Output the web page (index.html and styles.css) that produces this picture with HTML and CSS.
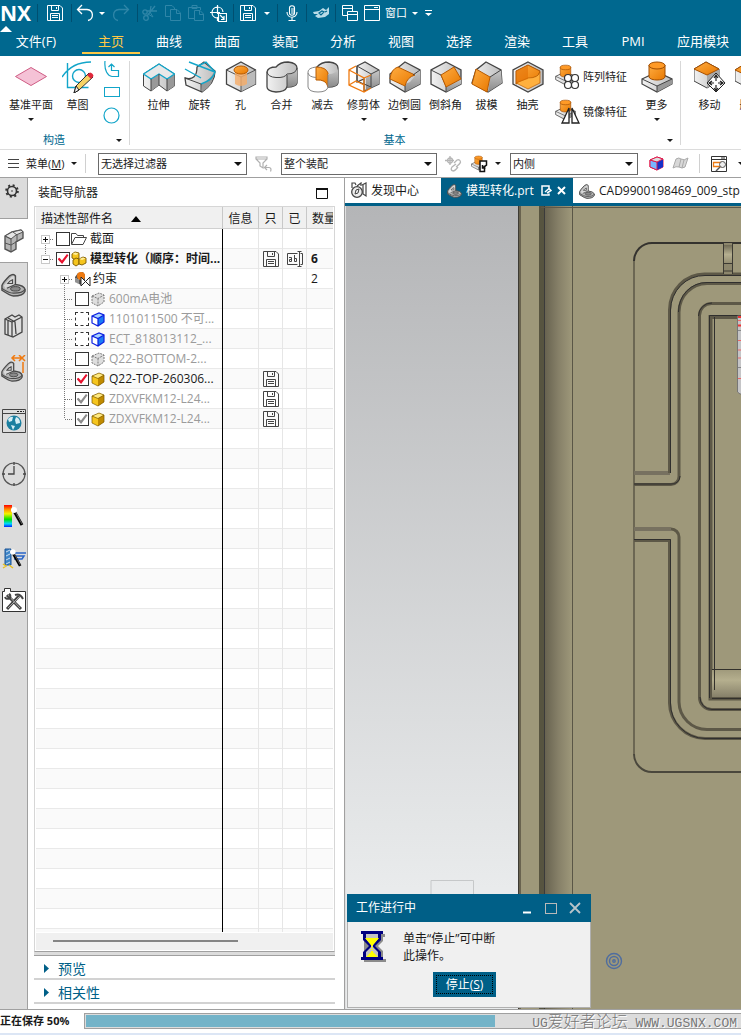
FILE: index.html
```html
<!DOCTYPE html>
<html lang="zh-CN">
<head>
<meta charset="utf-8">
<title>NX</title>
<link rel="stylesheet" href="styles.css">
</head>
<body>
<svg class="defs" aria-hidden="true">
  <defs>
    <linearGradient id="gOr" x1="0" y1="0" x2="1" y2="1"><stop offset="0" stop-color="#ffad42"/><stop offset="1" stop-color="#e87800"/></linearGradient>
    <linearGradient id="gGr" x1="0" y1="0" x2="1" y2="0"><stop offset="0" stop-color="#f2f2f2"/><stop offset="1" stop-color="#bdbdbd"/></linearGradient>
    <linearGradient id="gDk" x1="0" y1="0" x2="0" y2="1"><stop offset="0" stop-color="#c8c8c8"/><stop offset="1" stop-color="#8a8a8a"/></linearGradient>
    <linearGradient id="gRb" x1="0" y1="0" x2="0" y2="1"><stop offset="0" stop-color="#f00"/><stop offset=".2" stop-color="#ff9000"/><stop offset=".4" stop-color="#f4f400"/><stop offset=".65" stop-color="#00e000"/><stop offset=".85" stop-color="#00d8ff"/><stop offset="1" stop-color="#0020ff"/></linearGradient>
    <linearGradient id="gFillet" x1="0" y1="0" x2="1" y2="0"><stop offset="0" stop-color="#686350"/><stop offset=".5" stop-color="#868068"/><stop offset="1" stop-color="#9e987a"/></linearGradient>
    <linearGradient id="gSlot" x1="0" y1="0" x2="0" y2="1"><stop offset="0" stop-color="#6f6a55"/><stop offset=".5" stop-color="#b5af90"/><stop offset="1" stop-color="#8f896e"/></linearGradient>
    <linearGradient id="gLedge" x1="0" y1="0" x2="0" y2="1"><stop offset="0" stop-color="#9e987a"/><stop offset=".4" stop-color="#b5af8e"/><stop offset="1" stop-color="#87816a"/></linearGradient>
  </defs>
  <symbol id="save" viewBox="0 0 16 16"><path d="M.5 .5H13L15.500 3V15.500H.5ZM4.500 .5V5.500H11.500V.5M9.500 2V4M3.500 15.500V8.500H12.500V15.500M5 10.500H11M5 12.500H11" fill="none" stroke="currentColor"/></symbol>
  <symbol id="cubeY" viewBox="0 0 16 16"><path d="M2 5L9 2L14 4V11L8 15L2 12Z" fill="#f5c51d"/><path d="M2 5L9 2L14 4L8 7.500Z" fill="#ffe980"/><path d="M8 7.500L14 4V11L8 15Z" fill="#c08a00"/><path d="M2 5L9 2L14 4V11L8 15L2 12ZM2 5L8 7.500L14 4" fill="none" stroke="#7a5800" stroke-width=".7"/></symbol>
  <symbol id="cubeB" viewBox="0 0 16 16"><path d="M2 5L9 2L14 4V11L8 15L2 12Z" fill="#fff"/><path d="M2 5L9 2L14 4L8 7.500Z" fill="#a9d4ff"/><path d="M8 7.500L14 4V11L8 15Z" fill="#1b7bf5"/><path d="M2 5L9 2L14 4V11L8 15L2 12ZM2 5L8 7.500L14 4M8 7.500V15" fill="none" stroke="#0b1fe0" stroke-width="1.200"/></symbol>
  <symbol id="cubeG" viewBox="0 0 16 16"><path d="M2 5L9 2L14 4V11L8 15L2 12Z" fill="#dedede"/><path d="M2 5L9 2L14 4V11L8 15L2 12ZM2 5L8 7.500L14 4M8 7.500V15" fill="none" stroke="#7c7c7c" stroke-dasharray="2 1"/></symbol>
  <symbol id="asm" viewBox="0 0 16 16"><g stroke="#7a5800" stroke-width=".9" fill="#f5c51d"><path d="M1 3L4 1L8 2V7L5 9L1 7Z"/><path d="M2 9L5 7L8 8V13L5 15L2 13Z"/><path d="M8 8L12 6L15 7V12L11 14L8 13Z"/></g><path d="M1.500 3L4 1.500L7.500 2.500L5 4ZM8.500 8L12 6.500L14.500 7.500L11 9Z" fill="#ffee9a"/></symbol>
  <symbol id="folder" viewBox="0 0 16 16"><path d="M.5 13V2.500H5L6.500 4.500H12.500V6.500M.5 13.500L4 6.500H15.500L12 13.500Z" fill="#fff" stroke="#444"/></symbol>
  <symbol id="rename" viewBox="0 0 16 16"><path d="M10.500 2.500H.5V13.500H10.500M13.500 2.500H15.500V13.500H13.500M10.500 .5H14.500M12.500 .5V15.500M10.500 15.500H14.500" fill="none" stroke="currentColor"/><path d="M2 6.500H4.500V10.500H2.500V8.500H4.500M7.500 4V10.500H9.500V7.500H7.500" fill="none" stroke="currentColor"/></symbol>
  <symbol id="constraint" viewBox="0 0 18 16"><path d="M4 2L9 1L11 4V10L7 14L1 11V6Z" fill="#555"/><circle cx="7" cy="5" r="4" fill="#ef7a10"/><path d="M2 7V12M4 8V13" stroke="#ccc"/><path d="M7 6L16 15V6L7 15Z" fill="#fff" stroke="#222"/></symbol>
  <symbol id="part" viewBox="0 0 26 26"><path d="M1 19V14Q2 11 9 4Q13 1 15 4V13Q24 14 25 18V20Q23 25 13 25Q10 25 1 19Z" fill="#b4b4b4" stroke="#4a4a4a" stroke-width="1.500"/><path d="M3 14Q6 10 11 5Q14 3 14 6V13L5 18Z" fill="#d8d8d8"/><path d="M1 17Q8 22 13 22Q23 22 25 18M15 13L6 17M7 12Q9 9 12 8V12Z" fill="none" stroke="#4a4a4a" stroke-width="1.200"/><ellipse cx="15" cy="17.500" rx="5" ry="2.300" fill="#8a8a8a" stroke="#444"/></symbol>
  <symbol id="wand" viewBox="0 0 14 22"><path d="M3 6L11 20" stroke="#000" stroke-width="3"/><path d="M5 8L11 19" stroke="#777" stroke-width=".8"/><circle cx="3" cy="5" r="3" fill="#fff"/></symbol>
  <symbol id="gLast" viewBox="0 0 19 20"><path d="M9.500 0V10M10 10.500H18" stroke="#777" stroke-dasharray="1 1"/></symbol>
  <symbol id="gMid" viewBox="0 0 19 20"><path d="M9.500 0V20M10 10.500H18" stroke="#777" stroke-dasharray="1 1"/></symbol>
  <symbol id="gPlus" viewBox="0 0 19 20"><path d="M9.500 14V20M14 10.500H18" stroke="#777" stroke-dasharray="1 1"/><rect x="5.500" y="6.500" width="8" height="8" fill="#fff" stroke="#c8c8c8"/><path d="M7 10.500H12M9.500 8V13" stroke="#111"/></symbol>
  <symbol id="gMinus" viewBox="0 0 19 20"><path d="M9.500 0V6M14 10.500H18" stroke="#777" stroke-dasharray="1 1"/><rect x="5.500" y="6.500" width="8" height="8" fill="#fff" stroke="#c8c8c8"/><path d="M7 10.500H12" stroke="#111"/></symbol>
  <symbol id="boss" viewBox="0 0 32 32"><path d="M1 18L16 11L31 18V23L16 31L1 23Z" fill="url(#gGr)" stroke="#444" stroke-width="1.200"/><path d="M16 25L31 18V23L16 31Z" fill="#999"/><path d="M1 18L16 25L31 18M16 25V31" fill="none" stroke="#444"/><path d="M8 4V16C9 20 23 20 24 16V4Z" fill="url(#gOr)" stroke="#a04d00"/><ellipse cx="16" cy="4.500" rx="8" ry="3.500" fill="#ff9a26" stroke="#a04d00"/></symbol>
</svg>

<header class="top">
  <div class="titlebar">
    <span class="logo">NX</span>
    <i class="tsep"></i>
    <button class="tb w33" aria-label="保存"><svg width="16" height="16"><use href="#save"/></svg></button>
    <i class="tsep"></i>
    <button class="tb w25" aria-label="撤消"><svg width="18" height="18" viewBox="0 0 18 18"><path d="M6 1L1.500 5.500L6 10M1.500 5.500H11C18 6 18 15 12 16.500" fill="none" stroke="currentColor" stroke-width="1.300"/></svg></button>
    <button class="tb w10" aria-label="撤消列表"><i class="caret"></i></button>
    <button class="tb w28 dim" aria-label="重做"><svg width="18" height="18" viewBox="0 0 18 18"><path d="M12 1L16.500 5.500L12 10M16.500 5.500H7C0 6 0 15 6 16.500" fill="none" stroke="currentColor" stroke-width="1.300"/></svg></button>
    <i class="tsep ml2"></i>
    <button class="tb w23 dim" aria-label="剪切"><svg width="16" height="16" viewBox="0 0 16 16"><path d="M5 6L15 6M5 11L13 1M8 7L9 1" fill="none" stroke="currentColor" stroke-width="1.300"/><circle cx="4" cy="13" r="2.300" fill="none" stroke="currentColor" stroke-width="1.300"/><circle cx="3" cy="7" r="2.200" fill="none" stroke="currentColor" stroke-width="1.300"/><path d="M8 7L11 12L6 9" fill="none" stroke="currentColor"/></svg></button>
    <button class="tb w23 dim" aria-label="复制"><svg width="16" height="16" viewBox="0 0 16 16"><path d="M5 11.500H.5V.5H7L9.500 3V4.500M5.500 4.500H12L15.500 8V15.500H5.500ZM11.500 4.500V8.500H15.500" fill="none" stroke="currentColor"/></svg></button>
    <button class="tb w23 dim" aria-label="粘贴"><svg width="16" height="16" viewBox="0 0 16 16"><path d="M6 13.500H.5V2.500H12.500V5M4 3.500V.5H9V3.500ZM6.500 5.500H12L15.500 9V15.500H6.500ZM11.500 5.500V9.500H15.500" fill="none" stroke="currentColor"/></svg></button>
    <button class="tb w23" aria-label="重复命令"><svg width="17" height="17" viewBox="0 0 17 17"><path d="M7 13A5.500 5.500 0 1 1 13 7M0 7.500H10M7.500 0V9M7.500 12V16M8.500 8.500H16.500V16.500H8.500ZM10 10L14 14M14 11V14.500H11" fill="none" stroke="currentColor" stroke-width="1.200"/></svg></button>
    <i class="tsep ml3"></i>
    <button class="tb w28" aria-label="保存"><svg width="16" height="16"><use href="#save"/></svg></button>
    <button class="tb w10" aria-label="保存列表"><i class="caret"></i></button>
    <i class="tsep ml5"></i>
    <button class="tb w28" aria-label="语音"><svg width="12" height="17" viewBox="0 0 12 17"><path d="M3.500 3C3.500 0 8.500 0 8.500 3V8C8.500 11 3.500 11 3.500 8ZM1 7C1 14 11 14 11 7M6 12V15.500M2.500 15.500H9.500M5 4H8M5 6H8M5 8H8" fill="none" stroke="currentColor" stroke-width="1.100"/></svg></button>
    <i class="tsep"></i>
    <button class="tb w28" aria-label="触控"><svg width="17" height="12" viewBox="0 0 17 12"><path d="M0 5L6 4L10 1L13 3L16 0V7L12 10L5 11L2 9L5 7L1 7Z" fill="#b9dbe7"/><path d="M6 6L9 4L11 5L8 8ZM12 5L14 4" fill="none" stroke="#00688f" stroke-width="1.200"/></svg></button>
    <i class="tsep"></i>
    <button class="tb w28" aria-label="切换窗口"><svg width="16" height="16" viewBox="0 0 16 16"><path d="M.5 .5H10.500V10.500H.5ZM.5 3.500H10.500" fill="none" stroke="currentColor"/><path d="M5.500 6.500H15.500V15.500H5.500ZM5.500 9.500H15.500" fill="#00688f" stroke="currentColor"/></svg></button>
    <button class="tb win" aria-haspopup="true"><svg width="16" height="16" viewBox="0 0 16 16"><path d="M.5 .5H15.500V15.500H.5ZM.5 4.500H15.500M10 2.500H14" fill="none" stroke="currentColor"/></svg>窗口 <i class="caret"></i></button>
    <button class="tb w10 custom" aria-label="自定义"><svg width="7" height="6" viewBox="0 0 7 6"><path d="M0 0H7V1H0ZM0 3H7L3.500 6Z" fill="currentColor"/></svg></button>
  </div>
  <nav class="tabs">
    <a href="#" class="file">文件(F)</a><a href="#" class="on">主页</a><a href="#">曲线</a><a href="#">曲面</a><a href="#">装配</a><a href="#">分析</a><a href="#">视图</a><a href="#">选择</a><a href="#">渲染</a><a href="#">工具</a><a href="#">PMI</a><a href="#" class="wide">应用模块</a>
  </nav>
</header>

<section class="ribbon">
  <div class="rgroup g1">
    <div class="tools">
      <button class="rb plane"><svg width="32" height="32" viewBox="0 0 32 32"><path d="M.5 15.500L16 6.500L31.500 15.500L16 24.500Z" fill="#f5c2d6" stroke="#cf5c84"/></svg>基准平面<i class="caret"></i></button>
      <button class="rb"><svg width="32" height="32" viewBox="0 0 32 32"><path d="M5.500 2V26.500H26.500M0 16C6 7 16 1 29 1" fill="none" stroke="#12a5c9" stroke-width="1.400"/><circle cx="17" cy="15" r="6.500" fill="none" stroke="#12a5c9" stroke-width="1.400"/><path d="M12 32L14 25L27 12L31 16L17 29Z" fill="#f6d264" stroke="#333"/><path d="M25 14L28 11.500Q31 12 31.500 15L29 18Z" fill="#e0283c"/><path d="M12 32L14 25L17 29Z" fill="#eee" stroke="#222"/></svg>草图</button>
      <div class="mini">
        <button aria-label="轮廓"><svg width="16" height="17" viewBox="0 0 16 17"><path d="M1 0C0 10 4 15 8 15.500H14.500V9.500H8M7.500 10V3M4.500 6L7.500 3L10.500 6" fill="none" stroke="#12a5c9" stroke-width="1.200"/></svg></button>
        <button aria-label="矩形"><svg width="16" height="11" viewBox="0 0 16 11"><rect x=".5" y=".5" width="15" height="9" fill="none" stroke="#12a5c9"/></svg></button>
        <button aria-label="圆"><svg width="17" height="17" viewBox="0 0 17 17"><circle cx="8.500" cy="8.500" r="7.500" fill="none" stroke="#12a5c9" stroke-width="1.200"/></svg></button>
      </div>
    </div>
    <div class="gname"><span>构造</span><button aria-label="构造选项"><i class="caret"></i></button></div>
  </div>
  <div class="rgroup g2">
    <div class="tools">
      <button class="rb"><svg width="32" height="32" viewBox="0 0 32 32"><path d="M.5 13L16 3L31.500 13V25L24 30L16 24L8 30L.5 25Z" fill="url(#gGr)" stroke="#444"/><path d="M8 18L16 13V24L8 30ZM24 18L31.500 13V25L24 30Z" fill="#999"/><path d="M.5 13L16 3L31.500 13L24 18L16 13L8 18Z" fill="#e8e8e8" stroke="#12a5c9" stroke-width="1.400"/><path d="M8 18V30M24 18V30M16 13V24" stroke="#444"/></svg>拉伸</button>
      <button class="rb"><svg width="32" height="32" viewBox="0 0 32 32"><path d="M1 17Q13 20 13 6L20 1L31 10Q31 22 18 31L2 24Z" fill="url(#gGr)" stroke="#444" stroke-width="1.300"/><path d="M17 23Q26 19 30 11Q30 24 18 31Z" fill="#999"/><path d="M1 8L17 17M5 1L31 11Q29 19 17 23M14 5L22 1L31 11" fill="none" stroke="#12a5c9" stroke-width="1.400"/><path d="M1 17L17 23V31" fill="none" stroke="#444"/></svg>旋转</button>
      <button class="rb"><svg width="32" height="32" viewBox="0 0 32 32"><path d="M16 1L30.500 9V23L16 30.500L1.500 23V9Z" fill="url(#gGr)" stroke="#444" stroke-width="1.300"/><path d="M16 16L30.500 9V23L16 30.500Z" fill="#bbb"/><path d="M1.500 9L16 16L30.500 9M16 16V30" fill="none" stroke="#555"/><path d="M10 9V23Q16 27 22 23V9Z" fill="#f6ad68" fill-opacity=".8"/><ellipse cx="16" cy="9" rx="7" ry="4" fill="url(#gOr)" stroke="#b85a00"/></svg>孔</button>
      <button class="rb"><svg width="32" height="32" viewBox="0 0 32 32"><path d="M1 11Q2 6 10 6Q14 1 22 1Q31 2 31 7V22Q30 26 21 26Q19 31 10 31Q1 30 1 26Z" fill="url(#gGr)" stroke="#444" stroke-width="1.300"/><path d="M21 14Q30 13 31 7V22Q30 26 21 26Z" fill="url(#gDk)"/><path d="M1 11Q2 16 10 16.500Q19 17 21 13Q30 13 31 7M21 14V26" fill="none" stroke="#444"/></svg>合并</button>
      <button class="rb"><svg width="32" height="32" viewBox="0 0 32 32"><path d="M10 6Q14 1 22 1Q31 2 31 7V22Q30 26 21 26L10 20Z" fill="url(#gGr)" stroke="#444" stroke-width="1.300"/><path d="M1 11V26Q2 31 11 31Q20 31 21 26V20L9 16Z" fill="#fff"/><path d="M9 6Q19 6 21 12V26Q19 18 9 19Z" fill="url(#gOr)" stroke="#b85a00"/><path d="M21 13Q30 13 31 7V22Q30 26 21 26Z" fill="url(#gDk)"/><path d="M9 6Q1 7 1 11V26Q2 31 11 31Q20 31 21 26V14M1 12Q2 16 9 16.500" fill="none" stroke="#888"/></svg>减去</button>
      <button class="rb"><svg width="32" height="32" viewBox="0 0 32 32"><path d="M9 5L17 1L31 9V23L16 30V18L9 21Z" fill="url(#gGr)" stroke="#444" stroke-width="1.200"/><path d="M23 13L31 9V23L18 29V17Z" fill="url(#gDk)"/><path d="M9 5L23 13L31 9M9 5V20L23 26V13" fill="none" stroke="#444"/><path d="M8 5L1 9V24L16 31L23 27M1 9L16 17V31M1 24L8 20L16 24M16 17L23 14" fill="none" stroke="#ef7a10" stroke-width="1.300"/></svg>修剪体<i class="caret"></i></button>
      <button class="rb"><svg width="32" height="32" viewBox="0 0 32 32"><path d="M16 1L31 9V23L16 31L1 22V13Z" fill="url(#gGr)" stroke="#444" stroke-width="1.300"/><path d="M21 21L31 9V23L16 31V23Z" fill="url(#gDk)"/><path d="M1 18Q2 8 9 6L26 14Q18 16 16 25Z" fill="url(#gOr)" stroke="#b85a00"/><path d="M16 25V31M24 14L31 9" stroke="#444"/></svg>边倒圆<i class="caret"></i></button>
      <button class="rb"><svg width="32" height="32" viewBox="0 0 32 32"><path d="M16 1L31 9V23L16 31L1 23V9Z" fill="url(#gGr)" stroke="#444" stroke-width="1.300"/><path d="M16 26L26 20L31 18V23L16 31Z" fill="url(#gDk)"/><path d="M1 9L11 14L16 25V31" fill="none" stroke="#444"/><path d="M11 14L24 6L31 18L16 26Z" fill="url(#gOr)" stroke="#b85a00"/></svg>倒斜角</button>
      <button class="rb"><svg width="32" height="32" viewBox="0 0 32 32"><path d="M15 1L30 9L31 22L17 31L1 22L5 9Z" fill="url(#gGr)" stroke="#444" stroke-width="1.300"/><path d="M19 16L30 9L31 22L17 31Z" fill="url(#gDk)"/><path d="M5 8L19 16L16 31L1 23Z" fill="url(#gOr)" stroke="#b85a00"/><path d="M19 16L30 9" stroke="#444"/></svg>拔模</button>
      <button class="rb"><svg width="32" height="32" viewBox="0 0 32 32"><path d="M16 1L31 9V23L16 31L1 23V9Z" fill="url(#gGr)" stroke="#444" stroke-width="1.300"/><path d="M16 4L28 10Q27 17 16 18L4 23V10Z" fill="url(#gOr)" stroke="#a85000"/><path d="M4 22L16 17Q26 17 28 11V22L16 28Z" fill="#ffb03e" stroke="#b85a00" stroke-width=".7"/><path d="M4 10V22L16 18V4Z" fill="#e06c00" fill-opacity=".55"/></svg>抽壳</button>
      <div class="stack">
        <button><svg width="26" height="26" viewBox="0 0 26 26"><use href="#boss" width="21" height="22"/><g fill="#fff" stroke="#333" stroke-width="1.200"><circle cx="13" cy="14" r="3.500"/><circle cx="20" cy="14" r="3.500"/><circle cx="13" cy="21" r="3.500"/><circle cx="20" cy="21" r="3.500"/></g></svg>阵列特征</button>
        <button><svg width="26" height="26" viewBox="0 0 26 26"><use href="#boss" width="21" height="22"/><path d="M14 9V24H7ZM17 9V24H24Z" fill="#fff" stroke="#222" stroke-width="1.300"/></svg>镜像特征</button>
      </div>
      <button class="rb more"><svg width="32" height="32"><use href="#boss"/></svg>更多<i class="caret"></i></button>
    </div>
    <div class="gname"><span>基本</span><button aria-label="基本选项"><i class="caret"></i></button></div>
  </div>
  <div class="rgroup g3">
    <div class="tools">
      <button class="rb"><svg width="32" height="32" viewBox="0 0 32 32"><path d="M12 1L25 8V20L13 27L0 20V8Z" fill="url(#gGr)" stroke="#444"/><path d="M13 14L25 8V20L13 27Z" fill="#a8a8a8"/><path d="M0 8L12 1L25 8L13 14Z" fill="url(#gOr)" stroke="#a85000"/><path d="M22 12L31 22L22 31L13 22Z" fill="#fff" stroke="#222"/><path d="M22 14V20M22 24V30M15 22H20M24 22H29M20 17L22 14L24 17M20 27L22 30L24 27M18 20L15 22L18 24M26 20L29 22L26 24" fill="none" stroke="#222" stroke-width="1.200"/></svg>移动</button>
      <button class="rb"><svg width="32" height="32" viewBox="0 0 32 32"><path d="M0 9L13 1L26 8V20L13 27L0 20Z" fill="url(#gGr)" stroke="#444"/><path d="M0 9L13 1L26 8L13 15Z" fill="url(#gOr)" stroke="#a85000"/></svg>删除</button>
    </div>
  </div>
</section>

<section class="filterbar">
  <button class="menu"><svg width="11" height="11" viewBox="0 0 11 11"><path d="M0 1.500H11M0 5.500H11M0 9.500H11" stroke="#444"/></svg><span>菜单(<u>M</u>)</span><i class="caret"></i></button>
  <span class="sel s1"><select aria-label="选择过滤器"><option>无选择过滤器</option></select></span>
  <button class="fb w34" aria-label="重置过滤器"><svg width="18" height="16" viewBox="0 0 18 16"><path d="M1 1H12V3L8 7V12L5 10V7L1 3ZM1 3H12M12 9L9.500 11.500L12 14M10 11.500H14Q17 12 15.500 15.500" fill="none" stroke="#b0b0b0" stroke-width="1.200"/></svg></button>
  <span class="sel s2"><select aria-label="选择范围"><option>整个装配</option></select></span>
  <button class="fb w28 ml2" aria-label="链接"><svg width="17" height="16" viewBox="0 0 17 16"><g fill="none" stroke="#b5b5b5" stroke-width="1.300"><path d="M5 0V9M0 4.500H9"/><circle cx="5" cy="4.500" r="2.500"/><path d="M9 7L12 4Q15 3 15.500 6Q15 8 11 11M11 8L7 11Q5 14 8 15Q10 15 13 11"/></g></svg></button>
  <button class="fb w25" aria-label="选择"><svg width="18" height="18" viewBox="0 0 18 18"><use href="#boss" width="15" height="16"/><path d="M9 6H15.500V10.500H12.500V13.500H13.500V16.500H9Z" fill="#fff"/><path d="M12 6H9V16.500H13.500V13.500M11 6H15.500V10L11.500 13M11.500 10V13H14.500" fill="none" stroke="#111" stroke-width="1.500"/></svg></button>
  <button class="fb w12" aria-label="选择列表"><i class="caret"></i></button>
  <span class="sel s3"><select aria-label="侧面"><option>内侧</option></select></span>
  <button class="fb w26 ml5" aria-label="体"><svg width="15" height="15" viewBox="0 0 15 15"><path d="M1 4L8 1L14 3V11L8 14L1 11Z" fill="#8cb4ff" stroke="#e0184a"/><path d="M8 6L14 3V11L8 14Z" fill="#1530c8"/><path d="M1 4L8 6V14L1 11Z" fill="#7ab5ff" stroke="#e0184a"/><path d="M1 4L8 1L14 3L8 6Z" fill="#ddd" stroke="#e0184a"/></svg></button>
  <button class="fb w23" aria-label="面"><svg width="17" height="13" viewBox="0 0 17 13"><path d="M4 2Q7 0 9 2Q12 4 16 1L13 10Q10 12 7 10Q4 9 1 11Z" fill="#d8d8d8" stroke="#aaa"/><path d="M9 2L7 10M12 3L10 11" stroke="#aaa"/></svg></button>
  <i class="fsep"></i>
  <button class="fb w38" aria-label="查找"><svg width="17" height="16" viewBox="0 0 17 16"><path d="M.5 .5H15.500V15.500H.5ZM.5 3.500H15.500M10 2H14" fill="none" stroke="#333"/><path d="M2.500 6.500H10V10.500H2.500Z" fill="#fff" stroke="#ef7a10" stroke-width="1.300"/><circle cx="11.500" cy="8.500" r="3" fill="#eee" stroke="#555"/><path d="M9 11L5 15" stroke="#555" stroke-width="1.500"/></svg></button>
  <button class="fb" aria-label="查找列表"><i class="caret"></i></button>
</section>

<main>
  <aside class="rail">
    <button class="gear" aria-label="设置"><svg width="14" height="14" viewBox="0 0 14 14"><circle cx="7" cy="7" r="4.500" fill="none" stroke="#333" stroke-width="1.600"/><circle cx="7" cy="7" r="5.800" fill="none" stroke="#333" stroke-width="2" stroke-dasharray="2 2.550"/><circle cx="7" cy="7" r=".8" fill="#333"/></svg></button>
    <button class="active" aria-label="装配导航器"><svg width="20" height="24" viewBox="0 0 20 24"><g stroke="#555" fill="#d5d5d5"><path d="M1 7L8 3L17 1L19 3V9L12 13V20L7 23L1 20Z" fill="#b5b5b5" stroke-width="1.400"/><path d="M1 7L8 3L17 1L19 3L12 6L7 10Z" fill="#e5e5e5"/><path d="M1 7L7 10V23M1 14L7 16L12 13M9 3L13 6V13" fill="none"/></g></svg></button>
    <button aria-label="部件导航器"><svg width="25" height="25"><use href="#part"/></svg></button>
    <button aria-label="重用库"><svg width="20" height="24" viewBox="0 0 20 24"><path d="M1 5L8 1L11 3L15 1L18 3V18L9 23L1 20Z" fill="#ddd" stroke="#444" stroke-width="1.300"/><path d="M1 5L8 8L18 3M8 8V23M4 4L11 8L12 20M4 6V21" fill="none" stroke="#444" stroke-width="1.300"/></svg></button>
    <button aria-label="约束"><svg width="25" height="27" viewBox="0 0 25 27"><use href="#part" y="5" width="22" height="22"/><path d="M11 3H22M14 0L11 3L14 6M18 0L24 6M24 0L18 6M22 7V18" fill="none" stroke="#ef7a10" stroke-width="1.500"/></svg></button>
    <button class="gap" aria-label="网页浏览器"><svg width="24" height="24" viewBox="0 0 24 24"><path d="M.5 .5H23.500V23.500H.5ZM.5 4.500H23.500" fill="#ddd" stroke="#444"/><path d="M15 2.500H17M18 2.500H20M21 2.500H22" stroke="#222"/><circle cx="12" cy="14" r="7.500" fill="#1b7fa0"/><path d="M6 10Q9 7 11 8L10 12L7 13ZM14 8Q18 9 18 14L14 15L13 11ZM9 16L13 17L11 21Z" fill="#d5eef5"/></svg></button>
    <button class="gap" aria-label="历史记录"><svg width="24" height="24" viewBox="0 0 24 24"><circle cx="12" cy="12" r="11" fill="none" stroke="#555" stroke-width="1.200"/><path d="M12 4V12H6M12 0V3M12 21V24M0 12H3M21 12H24" fill="none" stroke="#444" stroke-width="1.300"/></svg></button>
    <button aria-label="颜色"><svg width="22" height="24" viewBox="0 0 22 24"><rect x="1" y="1" width="8" height="22" fill="url(#gRb)"/><use href="#wand" x="8" y="1" width="14" height="22"/></svg></button>
    <button aria-label="工艺"><svg width="24" height="22" viewBox="0 0 24 22"><path d="M3 2H9V18H3Z" fill="#3f86c8" stroke="#1c5596"/><path d="M4 5L8 3M4 9L8 7M4 13L8 11M4 17L8 15" stroke="#cde"/><path d="M12 6H24M13 9H22L20 12H12" fill="none" stroke="#2a65c8" stroke-width="1.500"/><path d="M1 17L4 19L1 21M7 18L11 21" stroke="#e8c020" stroke-width="1.500" fill="none"/><use href="#wand" x="8" y="0" width="13" height="21"/></svg></button>
    <button aria-label="工具"><svg width="24" height="24" viewBox="0 0 24 24"><path d="M.5 3.500H2.500V.5H8.500V3.500H23.500V23.500H.5Z" fill="#fff" stroke="#333"/><path d="M5 7L19 21M17 8L5 21" stroke="#444" stroke-width="3"/><path d="M6 7L18 20M17 9L6 20" stroke="#aaa"/><path d="M3 9Q4 12 8 10Q9 7 7 6M13 7Q18 5 21 11" fill="none" stroke="#444" stroke-width="2"/></svg></button>
  </aside>

  <section class="panel">
    <div class="ptitle"><h2>装配导航器</h2><button aria-label="最大化"><svg width="12" height="11" viewBox="0 0 12 11"><path d="M.5 1H11.500V10.500H.5Z" fill="none" stroke="#111"/><path d="M0 1H12" stroke="#111" stroke-width="2"/></svg></button></div>
    <div class="tree">
      <div class="rows">
      <table>
        <colgroup><col class="c0"><col class="c1"><col class="c2"><col class="c2"><col class="c3"></colgroup>
        <thead><tr><th>描述性部件名<svg class="sort" width="10" height="6" viewBox="0 0 10 6"><path d="M0 6L5 0L10 6Z"/></svg></th><th>信息</th><th>只</th><th>已</th><th>数量</th></tr></thead>
        <tbody>
          <tr><td><div class="n"><svg class="g"><use href="#gPlus"/></svg><input type="checkbox" id="n1"><svg class="i"><use href="#folder"/></svg><label for="n1">截面</label></div></td><td></td><td></td><td></td><td></td></tr>
          <tr class="b"><td><div class="n"><svg class="g"><use href="#gMinus"/></svg><input type="checkbox" id="n2" checked><svg class="i"><use href="#asm"/></svg><label for="n2">模型转化（顺序：时间...</label></div></td><td></td><td><svg class="s"><use href="#save"/></svg></td><td><svg class="s"><use href="#rename"/></svg></td><td>6</td></tr>
          <tr><td><div class="n l1"><svg class="g"><use href="#gPlus"/></svg><svg class="i wide"><use href="#constraint"/></svg><span>约束</span></div></td><td></td><td></td><td></td><td>2</td></tr>
          <tr class="off"><td><div class="n l1"><svg class="g"><use href="#gMid"/></svg><input type="checkbox" id="n4"><svg class="i"><use href="#cubeG"/></svg><label for="n4">600mA电池</label></div></td><td></td><td></td><td></td><td></td></tr>
          <tr class="off"><td><div class="n l1"><svg class="g"><use href="#gMid"/></svg><input type="checkbox" class="dash" id="n5"><svg class="i"><use href="#cubeB"/></svg><label for="n5">1101011500 不可...</label></div></td><td></td><td></td><td></td><td></td></tr>
          <tr class="off"><td><div class="n l1"><svg class="g"><use href="#gMid"/></svg><input type="checkbox" class="dash" id="n6"><svg class="i"><use href="#cubeB"/></svg><label for="n6">ECT_818013112_...</label></div></td><td></td><td></td><td></td><td></td></tr>
          <tr class="off"><td><div class="n l1"><svg class="g"><use href="#gMid"/></svg><input type="checkbox" id="n7"><svg class="i"><use href="#cubeG"/></svg><label for="n7">Q22-BOTTOM-2...</label></div></td><td></td><td></td><td></td><td></td></tr>
          <tr><td><div class="n l1"><svg class="g"><use href="#gMid"/></svg><input type="checkbox" id="n8" checked><svg class="i"><use href="#cubeY"/></svg><label for="n8">Q22-TOP-260306...</label></div></td><td></td><td><svg class="s"><use href="#save"/></svg></td><td></td><td></td></tr>
          <tr class="off"><td><div class="n l1"><svg class="g"><use href="#gMid"/></svg><input type="checkbox" id="n9" checked><svg class="i"><use href="#cubeY"/></svg><label for="n9">ZDXVFKM12-L24...</label></div></td><td></td><td><svg class="s"><use href="#save"/></svg></td><td></td><td></td></tr>
          <tr class="off"><td><div class="n l1"><svg class="g"><use href="#gLast"/></svg><input type="checkbox" id="n10" checked><svg class="i"><use href="#cubeY"/></svg><label for="n10">ZDXVFKM12-L24...</label></div></td><td></td><td><svg class="s"><use href="#save"/></svg></td><td></td><td></td></tr>
          <tr class="fill"><td></td><td></td><td></td><td></td><td></td></tr>
        </tbody>
      </table>
      </div>
      <div class="hscroll"><i></i></div>
    </div>
    <div class="splitter"></div>
    <button class="fold"><svg width="5" height="9" viewBox="0 0 5 9"><path d="M0 0L5 4.500L0 9Z" fill="#005f87"/></svg>预览</button>
    <button class="fold"><svg width="5" height="9" viewBox="0 0 5 9"><path d="M0 0L5 4.500L0 9Z" fill="#005f87"/></svg>相关性</button>
  </section>

  <section class="work">
    <div class="doctabs">
      <a href="#" class="d1"><svg width="17" height="17" viewBox="0 0 17 17"><path d="M1 6V1H4L5 3M6 4L10 1V4M11 3L15 1V14L12 12V3" fill="none" stroke="#444" stroke-width="1.200"/><circle cx="6" cy="10" r="5.300" fill="#eee" stroke="#444" stroke-width="1.300"/><path d="M4 12L5 8L8 7L7 11Z" fill="none" stroke="#444"/></svg>发现中心</a>
      <a href="#" class="d2 on"><svg width="15" height="15"><use href="#part"/></svg>模型转化.prt<svg class="mod" width="11" height="11" viewBox="0 0 11 11"><path d="M8 3V1H1V10H8V8.500M4 7L8 3.500L10 5.500L6 8" fill="none" stroke="#fff" stroke-width="1.500"/></svg><svg class="close" width="9" height="9" viewBox="0 0 9 9"><path d="M1 1L8 8M8 1L1 8" stroke="#fff" stroke-width="2"/></svg></a>
      <a href="#" class="d3"><svg width="16" height="16"><use href="#part"/></svg>CAD9900198469_009_stp</a>
    </div>
    <div class="stage">
      <svg class="scene" viewBox="346 206 395 803" preserveAspectRatio="xMinYMin slice">
        <path d="M431 900V880.500H473.500V900" fill="none" stroke="#c6c8c9"/>
        <rect x="518" y="206" width="900" height="1400" fill="#9e987a"/>
        <path d="M518.500 206V1500" stroke="#3d3b34"/><path d="M520 206V1500" stroke="#69634f" stroke-width="2"/>
        <rect x="539" y="206" width="6" height="1400" fill="#575440"/><rect x="545" y="206" width="27" height="1400" fill="url(#gFillet)"/>
        <path d="M544.500 206V1500" stroke="#3b3b3b"/><path d="M572.500 206V1500" stroke="#5a5646"/><path d="M541 207.500H1400" stroke="#5d594a"/>
        <g fill="none">
          <path d="M1400 243H652A18 18 0 0 0 634 261" stroke="#34322e" stroke-width="2"/>
          <path d="M634 261V754" stroke="#5b5747" stroke-width="1.500"/>
          <path d="M634 754A18 18 0 0 0 652 772H1400" stroke="#4a473c" stroke-width="2"/>
          <path d="M634 473H670" stroke="#777160" stroke-width="4"/>
          <g stroke="#5d5847" stroke-width="3"><path d="M669.500 473V310A35 36 0 0 1 705 274H1400"/><path d="M634 484.500H671A8 8 0 0 0 679 476V312A28 29 0 0 1 707 283.500H1400"/><path d="M634 540.500H669.500V703A36 36 0 0 0 705 738.500H1400"/><path d="M671 529A8 8 0 0 1 679 537V702A28 28 0 0 0 707 729.500H1400"/><path d="M1400 303.500H712A12 12 0 0 0 699.500 316V697A12 12 0 0 0 712 709.500H1400"/><path d="M1400 317H710.500V698.500H1400" stroke-width="4"/></g>
          <path d="M634 529H671" stroke="#777160" stroke-width="4"/>
          <g stroke="#302f2e"><path d="M670.500 473V310A34 35 0 0 1 705 275.500H1400"/><path d="M634 484H671A8 8 0 0 0 680 476"/><path d="M678.500 312A28 29 0 0 1 707 282.500H1400"/><path d="M634 539.500H670.500V703A35 35 0 0 0 705 738.500H1400"/><path d="M700 697A12 12 0 0 0 712 709.500H1400M698.500 316A13 13 0 0 1 712 303"/><path d="M1400 315.500H709.500V698"/><path d="M714.500 317V694"/></g>
        </g>
        <rect x="712" y="669" width="700" height="28" fill="url(#gLedge)"/><path d="M712 669.500H1400M712 698.500H1400M714.500 669V690" stroke="#33312c"/>
        <rect x="723" y="243" width="10" height="31" fill="#8c866c"/><rect x="723" y="245" width="9" height="19" fill="url(#gSlot)"/><path d="M723.500 243V274M732.500 243V274M723 263.500H732M723 271H732" stroke="#3c3a33"/>
        <path d="M737.500 316H1400V394H740L737.500 392Z" fill="#c5c5c7" stroke="#777"/><path d="M738 317H800M738 325.500H800" stroke="#e33" stroke-width="2"/><path d="M738 320.500H800M738 340.500H800M738 350H800M738 358H800M738 378.500H800" stroke="#e66"/><path d="M738 367.500H800M738 330.500H800" stroke="#888"/>
        <g fill="none" stroke="#4f6d9f" stroke-width="1.400"><circle cx="614" cy="961" r="7.500"/><circle cx="614" cy="961" r="4.500"/><circle cx="614" cy="961" r="1.200"/></g>
      </svg>
      <div class="dialog" role="dialog" aria-labelledby="dt">
        <div class="dhead"><span id="dt">工作进行中</span><button aria-label="最小化"><svg width="12" height="12" viewBox="0 0 12 12"><path d="M2 10.500H10" stroke="#fff" stroke-width="2"/></svg></button><button aria-label="最大化"><svg width="12" height="12" viewBox="0 0 12 12"><rect x=".5" y="1.500" width="11" height="10" fill="none" stroke="#b9b9b9"/></svg></button><button aria-label="关闭"><svg width="12" height="12" viewBox="0 0 12 12"><path d="M1 1L11 11M11 1L1 11" stroke="#b9c4c9" stroke-width="1.800"/></svg></button></div>
        <div class="dbody"><svg width="25" height="31" viewBox="0 0 25 31"><path d="M3 3H24V6H22V10L17 15L22 20V28H25V31H3Z" fill="#8b8b8b"/><path d="M0 0H22V3H20V9L14 15L20 21V26H22V29H0V26H2V21L8 15L2 9V3H0Z" fill="#000080"/><path d="M5 3H17V8L12 14V16L17 21V26H5V21L10 16V14L5 8Z" fill="#c3c3c3"/><path d="M4 7H18L12 14H10ZM11 20L17 26H5Z" fill="#ff0"/><path d="M11 14V21" stroke="#ff0" stroke-width="2" stroke-dasharray="1 1"/></svg><p>单击“停止”可中断<br>此操作。</p></div>
        <button class="stop">停止(<u>S</u>)</button>
      </div>
    </div>
  </section>
</main>

<footer class="status">
  <label for="pg">正在保存 50%</label>
  <progress id="pg" max="100" value="50"></progress>
  <span class="mark"><b>UG</b>爱好者论坛<b> WWW.UGSNX.COM</b></span>
</footer>
</body>
</html>
```
FILE: styles.css
```css
* { box-sizing: border-box; }
html, body { height: 100%; margin: 0; }
body {
  display: flex; flex-direction: column; overflow: hidden;
  font: 12px/16px "Open Sans", "Noto Sans CJK SC", sans-serif;
  color: #1a1a1a; background: #fff;
}
button { font: inherit; color: inherit; background: none; border: 0; padding: 0; margin: 0; }
a { color: inherit; text-decoration: none; }
svg { flex: none; display: block; }
.defs { width: 0; height: 0; position: absolute; }
.caret { display: block; flex: none; width: 0; border: 3px solid transparent; border-top-color: currentColor; border-bottom: 0; }
.w10 { width: 10px; } .w12 { width: 12px; } .w23 { width: 23px; } .w25 { width: 25px; } .w26 { width: 26px; } .w28 { width: 28px; } .w33 { width: 33px; } .w34 { width: 34px; } .w38 { width: 38px; }
.ml2 { margin-left: 2px; } .ml3 { margin-left: 3px; } .ml5 { margin-left: 5px; }

.top { flex: none; background: #00688f; color: #fff; }
.titlebar { display: flex; align-items: center; height: 26px; font-size: 11px; }
.logo { width: 37px; flex: none; font: bold 21px/26px "Open Sans", sans-serif; overflow: hidden; }
.tsep { width: 1px; height: 18px; background: #004f70; flex: none; }
.tb { display: flex; flex: none; align-items: center; justify-content: center; height: 26px; }
.dim { color: #2f86a8; }
.win { gap: 5px; }
.custom { margin-left: 5px; }
.tabs { display: flex; height: 30px; font-size: 13px; overflow: hidden; }
.tabs a { flex: none; width: 58px; text-align: center; line-height: 30px; height: 28px; }
.tabs .file { width: 82px; padding-right: 10px; }
.tabs .file::before { content: ""; float: left; border: 6px solid transparent; border-bottom-color: #fff; border-top: 0; margin-right: -12px; }
.tabs .wide { width: 82px; }
.tabs .on { color: #ffc845; border-bottom: 2px solid #ffc845; }

.ribbon { display: flex; flex: none; border-bottom: 1px solid #dcdcdc; font-size: 11px; overflow: hidden; height: 94px; }
.rgroup { flex: none; display: flex; flex-direction: column; justify-content: space-between; padding-top: 5px; position: relative; }
.rgroup::after { content: ""; position: absolute; right: 0; top: 5px; bottom: 4px; width: 1px; background: #d8d8d8; }
.g3::after { display: none; }
.tools { display: flex; }
.g1 .tools { padding-left: 8px; }
.g1 { width: 130px; }
.g2 { width: 551px; }
.g2 .tools, .g3 .tools { padding-left: 8px; }
.rb { width: 41px; flex: none; display: flex; flex-direction: column; align-items: center; line-height: 24px; white-space: nowrap; }
.rb .caret { margin-top: 1px; }
.plane { width: 46px; margin-right: 3px; }
.mini { width: 27px; display: flex; flex-direction: column; align-items: center; justify-content: space-between; height: 63px; }
.stack { width: 81px; padding: 3px 0 0 7px; display: flex; flex-direction: column; gap: 9px; }
.stack button { display: flex; align-items: center; gap: 2px; white-space: nowrap; }
.more { margin-left: 7px; }
.gname { display: flex; color: #00688f; line-height: 18px; text-align: center; }
.gname span { flex: 1; }
.gname button { width: 22px; color: #1a1a1a; display: grid; place-items: center; }

.filterbar { flex: none; height: 28px; display: flex; align-items: center; border-bottom: 1px solid #a0a0a0; font-size: 11px; overflow: hidden; }
.menu { flex: none; display: flex; align-items: center; gap: 7px; width: 86px; height: 19px; padding-left: 8px; margin-right: 12px; border-right: 1px solid #d0d0d0; white-space: nowrap; }
.sel { flex: none; display: grid; align-items: center; height: 22px; }
.s1 { width: 149px; } .s2 { width: 156px; } .s3 { width: 128px; margin-left: 6px; }
.sel select { grid-area: 1 / 1; width: 100%; height: 22px; appearance: none; background: #fff; border: 1px solid #6a6a6a; border-radius: 0; padding: 0 2px; font: inherit; color: inherit; }
.sel::after { content: ""; grid-area: 1 / 1; justify-self: end; margin-right: 5px; border: 4px solid transparent; border-top-color: #111; border-bottom: 0; pointer-events: none; }
.fb { flex: none; display: grid; place-items: center; height: 22px; }
.fsep { flex: none; width: 1px; height: 19px; background: #d0d0d0; margin-left: 7px; }

main { flex: 1; min-height: 0; display: flex; }
.rail { width: 28px; flex: none; background: #dcdcdc; border-right: 1px solid #a0a0a0; display: flex; flex-direction: column; }
.rail button { height: 42px; flex: none; display: grid; place-items: center; }
.rail .gear { height: 41px; border-bottom: 1px solid #a0a0a0; padding: 0 4px 14px 0; }
.rail .active { width: 28px; height: 44px; background: #fff; border-bottom: 1px solid #a0a0a0; }
.rail .gap { margin-top: 11px; }

.panel { width: 317px; flex: none; border-right: 1px solid #a0a0a0; padding: 0 9px 5px 6px; display: flex; flex-direction: column; }
.ptitle { height: 28px; flex: none; display: flex; align-items: center; justify-content: space-between; padding: 2px 7px 0 4px; }
.ptitle h2 { font-size: 12px; font-weight: 400; margin: 0; }
.tree { flex: 1; min-height: 0; border: 1px solid #d6d6d6; border-bottom-color: #a0a0a0; padding: 0 1px; display: flex; flex-direction: column; }
.rows { flex: 1; min-height: 0; overflow: hidden; background: repeating-linear-gradient(#fff 0 19px, #e9e9e9 19px 20px, #fafafa 20px 39px, #e9e9e9 39px 40px) 0 22px; }
table { table-layout: fixed; width: 100%; height: 100%; border-collapse: separate; border-spacing: 0; }
.c0 { width: 186px; } .c1 { width: 36px; } .c2 { width: 24px; } .c3 { width: auto; }
th, td { padding: 0; overflow: hidden; white-space: nowrap; border-left: 1px solid #e6e6e6; }
th { height: 22px; padding-top: 2px; background: #f0f0f0; font-weight: 400; text-align: center; border-left-color: #c8c8c8; border-bottom: 1px solid #d0d0d0; }
th:first-child { text-align: left; padding-left: 5px; border-left: 0; }
th:last-child, td:last-child { text-align: left; padding-left: 4px; }
th:last-child { padding-left: 5px; }
.sort { display: inline-block; margin-left: 18px; vertical-align: 1px; }
td { height: 20px; }
td:first-child { border-left: 0; }
td:nth-child(2) { border-left-color: #000; }
.fill td { height: auto; }
.n { display: flex; align-items: center; height: 20px; width: 186px; }
.l1 { padding-left: 19px; }
.g { width: 19px; height: 20px; }
.i { width: 16px; height: 16px; margin: 0 3px 0 1px; }
.i.wide { width: 18px; margin: 0 1px 0 0; }
.s { width: 16px; height: 16px; margin-left: 4px; color: #444; }
.b { font-weight: 700; }
.off label { color: #9b9b9b; }
input[type=checkbox] { appearance: none; flex: none; width: 14px; height: 14px; margin: 0 0 0 1px; border: 1px solid #333; background: #fff; display: grid; place-items: center; }
input.dash { border-style: dashed; }
input:checked::before { content: ""; width: 11px; height: 10px; background: #e8112d; clip-path: polygon(0 50%, 18% 38%, 40% 65%, 86% 0, 100% 12%, 42% 100%); }
.off input:checked::before { background: #8c8c8c; }
.hscroll { height: 17px; flex: none; background: #f0f0f0; margin: 1px 0; padding: 7px 0 0 17px; }
.hscroll i { display: block; width: 185px; height: 2px; background: #858585; }
.splitter { flex: none; height: 4px; background: #dcdcdc; border-bottom: 1px solid #a0a0a0; }
.fold { flex: none; height: 24px; display: flex; align-items: center; gap: 9px; padding: 3px 0 0 10px; font-size: 14px; color: #005f87; border-bottom: 2px solid #d2d2d2; }

.work { flex: 1; min-width: 0; display: flex; flex-direction: column; }
.doctabs { display: flex; flex: none; height: 28px; border-bottom: 3px solid #005f87; overflow: hidden; }
.doctabs a { display: flex; flex: none; align-items: center; gap: 4px; padding: 0 6px; white-space: nowrap; }
.doctabs .d1 { width: 96px; gap: 3px; }
.doctabs .d2 { width: 132px; }
.doctabs .mod { margin-left: 3px; }
.doctabs .close { margin-left: 1px; }
.doctabs .on { background: #005f87; color: #fff; }
.stage { flex: 1; min-height: 0; position: relative; overflow: hidden; background: linear-gradient(#b4b5b7, #e9ebec 85%); border-left: 1px solid #e0e0e0; }
.scene { width: 100%; height: 100%; }
.dialog { position: absolute; left: 1px; bottom: 1px; width: 244px; background: #f0f0f0; border: 1px solid #b0b0b0; border-top: 0; }
.dhead { display: flex; align-items: center; gap: 12px; height: 28px; margin: 0 -1px; padding: 0 10px 0 9px; background: #005f87; color: #fff; }
.dhead span { flex: 1; }
.dbody { display: flex; gap: 17px; padding: 8px 0 0 13px; }
.dbody p { margin: 0; line-height: 17px; }
.stop { display: block; width: 63px; height: 25px; margin: 8px 0 10px 85px; background: #005f87; color: #fff; outline: 1px dotted #000; outline-offset: -4px; }
.dbody svg { margin: 1px 0 -3px; }

.status { flex: none; height: 26px; position: relative; display: flex; border-top: 1px solid #a0a0a0; border-bottom: 2px solid #dce6f5; overflow: hidden; font-size: 11px; font-weight: 700; white-space: nowrap; }
.status label { width: 84px; flex: none; line-height: 22px; }
.status progress { flex: none; width: 822px; height: 16px; margin-top: 3px; appearance: none; border: 1px solid #a0a0a0; background: #dcdcdc; padding: 1px; }
progress::-webkit-progress-bar { background: #dcdcdc; }
progress::-webkit-progress-value { background: #73b3c8; }
.mark { position: absolute; right: 4px; top: 3px; font: 16px/20px "Liberation Mono", "Noto Sans CJK SC", monospace; font-weight: 300; color: #777; text-shadow: 1px 1px 0 #fff; white-space: pre; }
.mark b { font-size: 13px; font-weight: 400; }
```
